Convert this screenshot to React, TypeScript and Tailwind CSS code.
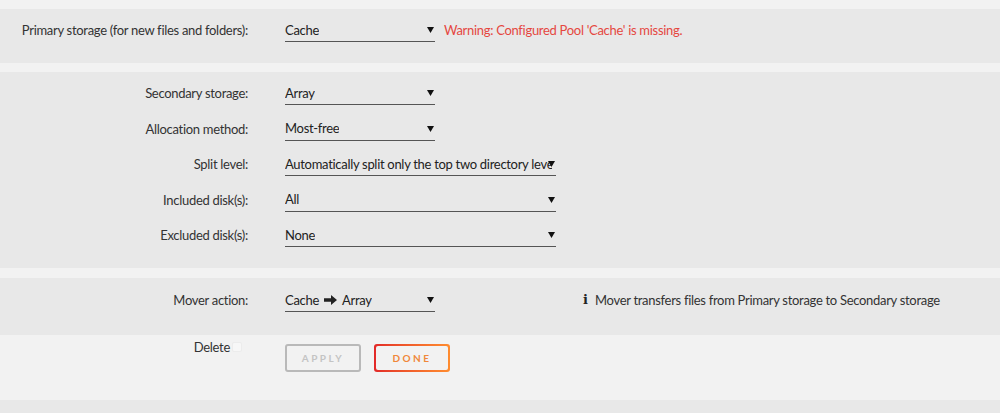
import React from "react";

// Petit composant "select" souligné, façon Unraid
function FakeSelect({
  value,
  wide = false,
}: {
  value: React.ReactNode;
  wide?: boolean;
}) {
  return (
    <div
      className={`relative h-6 border-b border-[#555] flex items-center pr-[4px] ${
        wide ? "w-[271px]" : "w-[150px]"
      }`}
    >
      <span className="whitespace-nowrap overflow-hidden text-[#222] leading-6">
        {value}
      </span>
      <svg
        width="7"
        height="6"
        viewBox="0 0 7 6"
        className="absolute right-[1px] top-[9px]"
      >
        <path d="M0 0 L7 0 L3.5 6 Z" fill="#111" />
      </svg>
    </div>
  );
}

function Row({
  label,
  children,
}: {
  label: string;
  children: React.ReactNode;
}) {
  return (
    <div className="flex items-start">
      <div className="w-[248px] text-right leading-6 text-[#333] whitespace-nowrap">
        {label}
      </div>
      <div className="ml-[37px] flex items-start">{children}</div>
    </div>
  );
}

export default function App() {
  return (
    <div
      className="w-[1000px] h-[413px] bg-[#f2f2f2] text-[13px] tracking-[-0.3px] overflow-hidden"
      style={{ fontFamily: "Lato, 'Noto Sans', sans-serif" }}
    >
      <div className="h-[9px]" />

      {/* PRIMARY */}
      <div className="bg-[#e8e8e8] h-[54px] pt-[9px]">
        <Row label="Primary storage (for new files and folders):">
          <FakeSelect value="Cache" />
          <span className="ml-[9px] leading-6 text-[#e5473f]">
            Warning: Configured Pool 'Cache' is missing.
          </span>
        </Row>
      </div>

      <div className="h-[9px]" />

      {/* SECONDARY */}
      <div className="bg-[#e8e8e8] h-[196px] pt-[9px] flex flex-col gap-[11.5px]">
        <Row label="Secondary storage:">
          <FakeSelect value="Array" />
        </Row>
        <Row label="Allocation method:">
          <FakeSelect value="Most-free" />
        </Row>
        <Row label="Split level:">
          <FakeSelect
            wide
            value="Automatically split only the top two directory levels as required"
          />
        </Row>
        <Row label="Included disk(s):">
          <FakeSelect wide value="All" />
        </Row>
        <Row label="Excluded disk(s):">
          <FakeSelect wide value="None" />
        </Row>
      </div>

      <div className="h-[10px]" />

      {/* MOVER */}
      <div className="bg-[#e8e8e8] h-[57px] pt-[10px]">
        <Row label="Mover action:">
          <FakeSelect
            value={
              <span className="flex items-center gap-[5px]">
                Cache
                <svg width="13" height="10" viewBox="0 0 13 10">
                  <path
                    d="M0 3.2 H7 V0 L13 5 L7 10 V6.8 H0 Z"
                    fill="#222"
                  />
                </svg>
                Array
              </span>
            }
          />
          <div className="ml-[148px] flex items-center leading-6 text-[#333]">
            <span
              className="font-bold text-[13px] text-[#222] w-[12px]"
              style={{ fontFamily: "'DejaVu Serif', serif" }}
            >
              i
            </span>
            <span>Mover transfers files from Primary storage to Secondary storage</span>
          </div>
        </Row>
      </div>

      {/* ACTIONS */}
      <div className="h-[65px] flex items-start pt-[2px]">
        <div className="w-[248px] flex justify-end items-center pr-[6px] leading-5 text-[#333]">
          Delete
          <span className="ml-[2px] w-[10px] h-[10px] rounded-[2px] border border-[#ececec] bg-[#f7f7f7]" />
        </div>
        <div className="ml-[37px] mt-[7px] flex gap-[13px]">
          <button
            type="button"
            className="w-[76px] h-[28px] rounded-[3px] border-2 border-[#b9b9b9] bg-[#f2f2f2] text-[10px] font-bold tracking-[2.5px] text-[#c4c4c4]"
          >
            APPLY
          </button>
          <div className="w-[76px] h-[28px] rounded-[3px] p-[2px] bg-gradient-to-r from-[#e22828] to-[#ff8c2f]">
            <button
              type="button"
              className="w-full h-full rounded-[2px] bg-[#f2f2f2] text-[10px] font-bold tracking-[2.5px] text-[#f0883a]"
            >
              DONE
            </button>
          </div>
        </div>
      </div>

      <div className="h-[13px] bg-[#e8e8e8]" />
    </div>
  );
}
